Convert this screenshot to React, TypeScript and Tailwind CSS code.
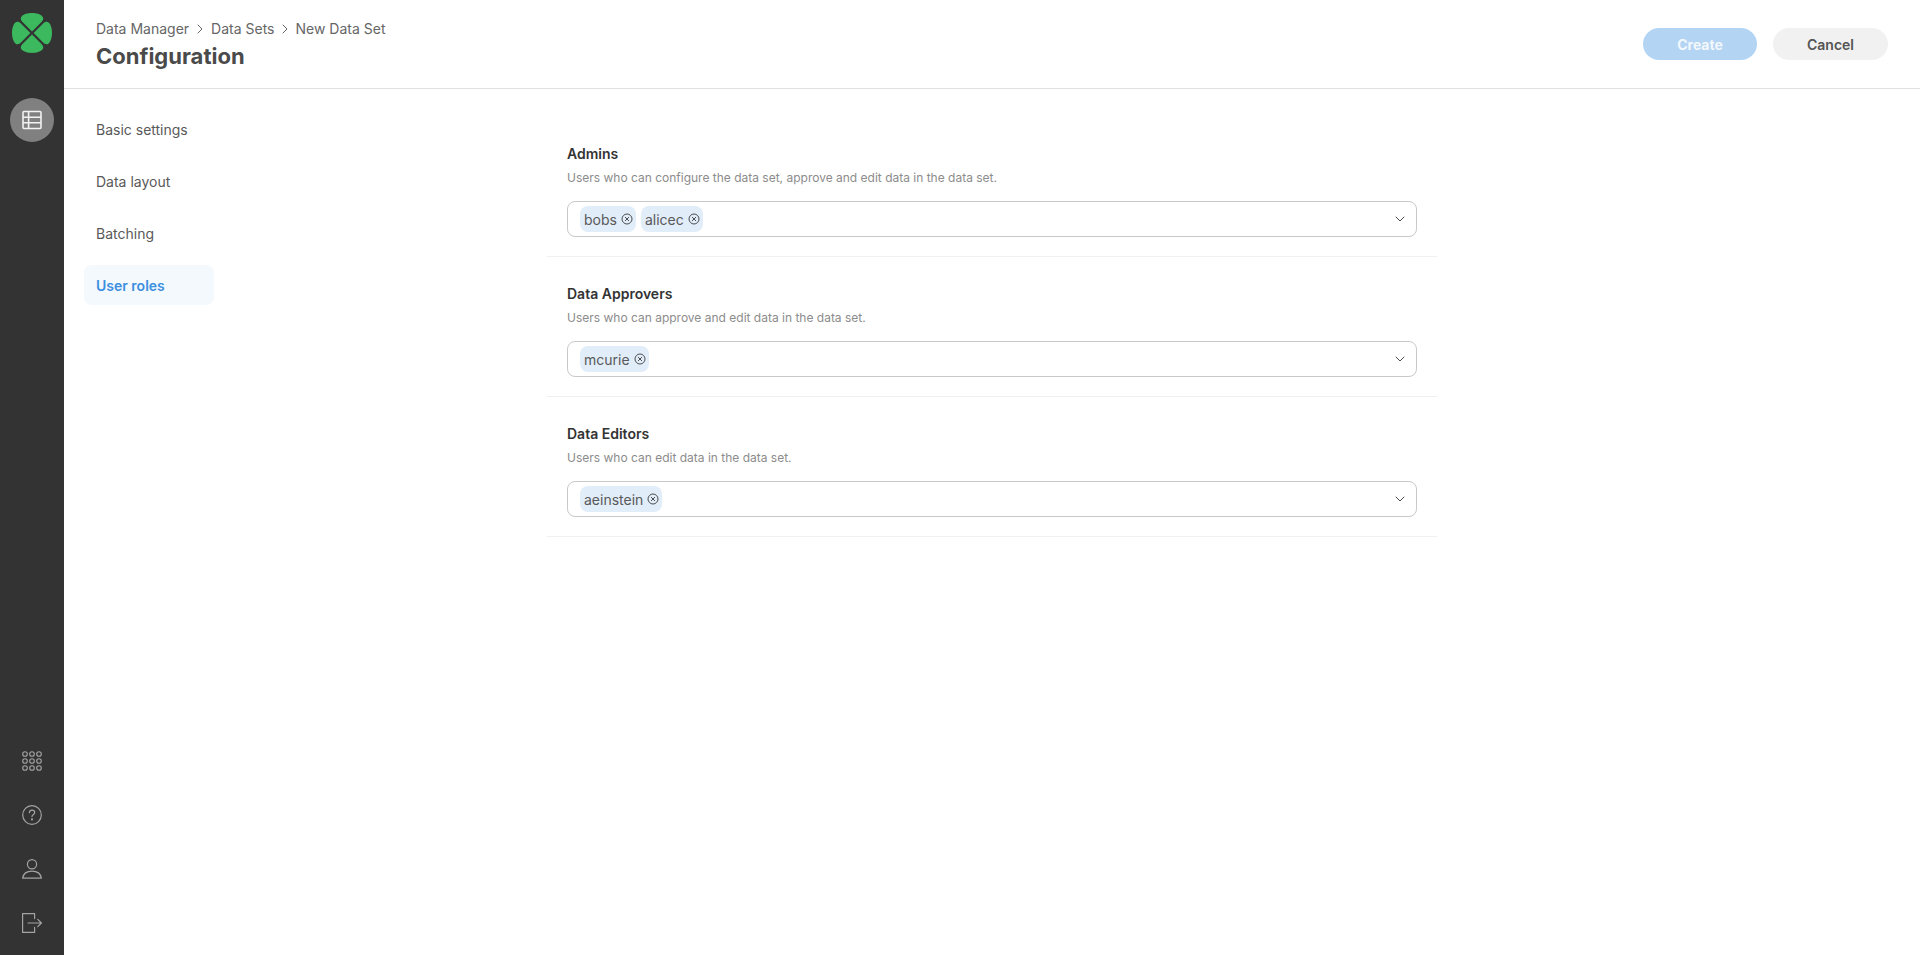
import { ChevronDown, ChevronRight } from "lucide-react"

// Sidebar icons
const Logo = () => (
  <svg width="40" height="40" viewBox="0 0 40 40" fill="#3cb95f">
    {[0, 90, 180, 270].map((deg) => (
      <path
        key={deg}
        transform={`rotate(${ deg } 20 20)`}
        d="M20 18.4 L10.5 8.9 C8.6 7 8.2 5.2 9.6 3.4 C11.5 1.2 16 0 20 0 C24 0 28.5 1.2 30.4 3.4 C31.8 5.2 31.4 7 29.5 8.9 Z" />
    ))}
  </svg>
)

const TableIcon = () => (
  <svg width="20" height="20" viewBox="0 0 20 20" fill="none" stroke="#f2f2f2" strokeWidth="1.6">
    <rect x="1" y="1.5" width="18" height="17" rx="1" />
    <path d="M1 7.2 H19 M1 12.8 H19 M6.6 1.5 V18.5" />
  </svg>
)

const GridIcon = () => (
  <svg width="20" height="20" viewBox="0 0 20 20" fill="none" stroke="#a3a3a3" strokeWidth="1.1">
    {[3, 10, 17].flatMap((cy) => [3, 10, 17].map((cx) => (
      <circle key={`${ cx }-${ cy }`} cx={cx} cy={cy} r="2.3" />
    )))}
  </svg>
)

const HelpIcon = () => (
  <svg width="20" height="20" viewBox="0 0 20 20" fill="none" stroke="#a3a3a3" strokeWidth="1.2" strokeLinecap="round">
    <circle cx="10" cy="10" r="9.3" />
    <path d="M7.4 7.6 C7.5 6 8.7 5.2 10 5.2 C11.5 5.2 12.7 6.2 12.7 7.6 C12.7 9.4 10 9.6 10 11.6" />
    <circle cx="10" cy="14.4" r=".5" fill="#a3a3a3" />
  </svg>
)

const UserIcon = () => (
  <svg width="20" height="20" viewBox="0 0 20 20" fill="none" stroke="#a3a3a3" strokeWidth="1.2" strokeLinejoin="round">
    <circle cx="10" cy="5.2" r="4.6" />
    <path d="M.6 19.2 C1.4 14.6 5 12.2 10 12.2 C15 12.2 18.6 14.6 19.4 19.2 Z" />
  </svg>
)

const LogoutIcon = () => (
  <svg width="20" height="20" viewBox="0 0 20 20" fill="none" stroke="#a3a3a3" strokeWidth="1.2" strokeLinecap="round" strokeLinejoin="round">
    <path d="M12.6 5.6 V.6 H.6 V19.4 H12.6 V14.4" />
    <path d="M6 10 H19.4 M15.8 6.4 L19.4 10 L15.8 13.6" />
  </svg>
)

const ChipClose = () => (
  <svg width="12" height="12" viewBox="0 0 12 12" fill="none" stroke="#4d4d4d" strokeWidth="1">
    <circle cx="6" cy="6" r="5" />
    <path d="M4 4 L8 8 M8 4 L4 8" />
  </svg>
)

const Sidebar = () => (
  <aside className="w-16 shrink-0 bg-[#333333] flex flex-col items-center pt-[13px] pb-[10px]">
    <Logo />
    <div className="mt-[45px] size-11 rounded-full bg-[#808080] flex items-center justify-center">
      <TableIcon />
    </div>
    <div className="mt-auto flex flex-col gap-[10px]">
      {[GridIcon, HelpIcon, UserIcon, LogoutIcon].map((Icon, i) => (
        <div key={i} className="size-11 flex items-center justify-center">
          <Icon />
        </div>
      ))}
    </div>
  </aside>
)

const Header = () => (
  <header className="h-[89px] shrink-0 border-b border-[#e0e0e0] pl-8 pr-8 flex items-start justify-between">
    <div className="pt-[19px]">
      <div className="flex items-center text-sm leading-5 text-[#666666]">
        <span>Data Manager</span>
        <ChevronRight size={16} strokeWidth={1.5} className="mx-[3px] text-[#666666]" />
        <span>Data Sets</span>
        <ChevronRight size={16} strokeWidth={1.5} className="ml-[3px] mr-[2px] text-[#666666]" />
        <span>New Data Set</span>
      </div>
      <h1 className="mt-[3px] text-[22px] leading-7 font-bold text-[#4a4a4a]">Configuration</h1>
    </div>
    <div className="pt-7 flex gap-4">
      <button type="button" className="w-[114px] h-8 rounded-full bg-[#b3d4f2] pt-px text-sm font-bold text-[#f3f8fd]">
        Create
      </button>
      <button type="button" className="w-[115px] h-8 rounded-full bg-[#f1f1f1] pt-px text-sm font-semibold text-[#555555]">
        Cancel
      </button>
    </div>
  </header>
)

const navItems = ['Basic settings', 'Data layout', 'Batching', 'User roles']

const SideNav = () => (
  <nav className="pl-5 pt-[20px] flex flex-col gap-3 items-start">
    {navItems.map((item) => (
      <div
        key={item}
        className={item === 'User roles'
          ? "w-[130px] h-10 px-3 pt-[2px] rounded-lg flex items-center text-sm font-semibold bg-[#f4f9fd] text-[#3b8fe0]"
          : "w-[130px] h-10 px-3 pt-[2px] rounded-lg flex items-center text-sm text-[#595959]"}>
        {item}
      </div>
    ))}
  </nav>
)

const Chip = ({ label }: { label: string }) => (
  <span className="h-[26px] pl-1 pr-[3px] rounded-lg bg-[#e1edf9] flex items-center gap-1 text-sm text-[#595959]">
    <span className="pt-[2px]">{label}</span>
    <ChipClose />
  </span>
)

const sections = [
  {
    title: 'Admins',
    description: 'Users who can configure the data set, approve and edit data in the data set.',
    users: ['bobs', 'alicec']
  },
  {
    title: 'Data Approvers',
    description: 'Users who can approve and edit data in the data set.',
    users: ['mcurie']
  },
  {
    title: 'Data Editors',
    description: 'Users who can edit data in the data set.',
    users: ['aeinstein']
  }
]

const RoleSection = ({ title, description, users }: typeof sections[number]) => (
  <section className="h-[140px] px-5 pt-[27px] border-b border-[#f0f0f0]">
    <h2 className="text-sm leading-5 font-semibold text-[#333333]">{title}</h2>
    <p className="mt-[5px] text-xs leading-[18px] text-[#8c8c8c]">{description}</p>
    <div className="mt-[14px] h-9 pl-3 pr-2 rounded-lg border border-[#c9c9c9] flex items-center justify-between">
      <div className="flex gap-[5px]">
        {users.map((user) => <Chip key={user} label={user} />)}
      </div>
      <ChevronDown size={16} strokeWidth={1.5} className="text-[#4d4d4d]" />
    </div>
  </section>
)

export default function App() {
  return (
    <div className="h-[955px] flex bg-white font-['Inter',sans-serif]">
      <Sidebar />
      <main className="flex-1 flex flex-col">
        <Header />
        <div className="grid grid-cols-[1fr_890px_1fr]">
          <SideNav />
          <div className="pt-7">
            {sections.map((section) => <RoleSection key={section.title} {...section} />)}
          </div>
        </div>
      </main>
    </div>
  )
}
